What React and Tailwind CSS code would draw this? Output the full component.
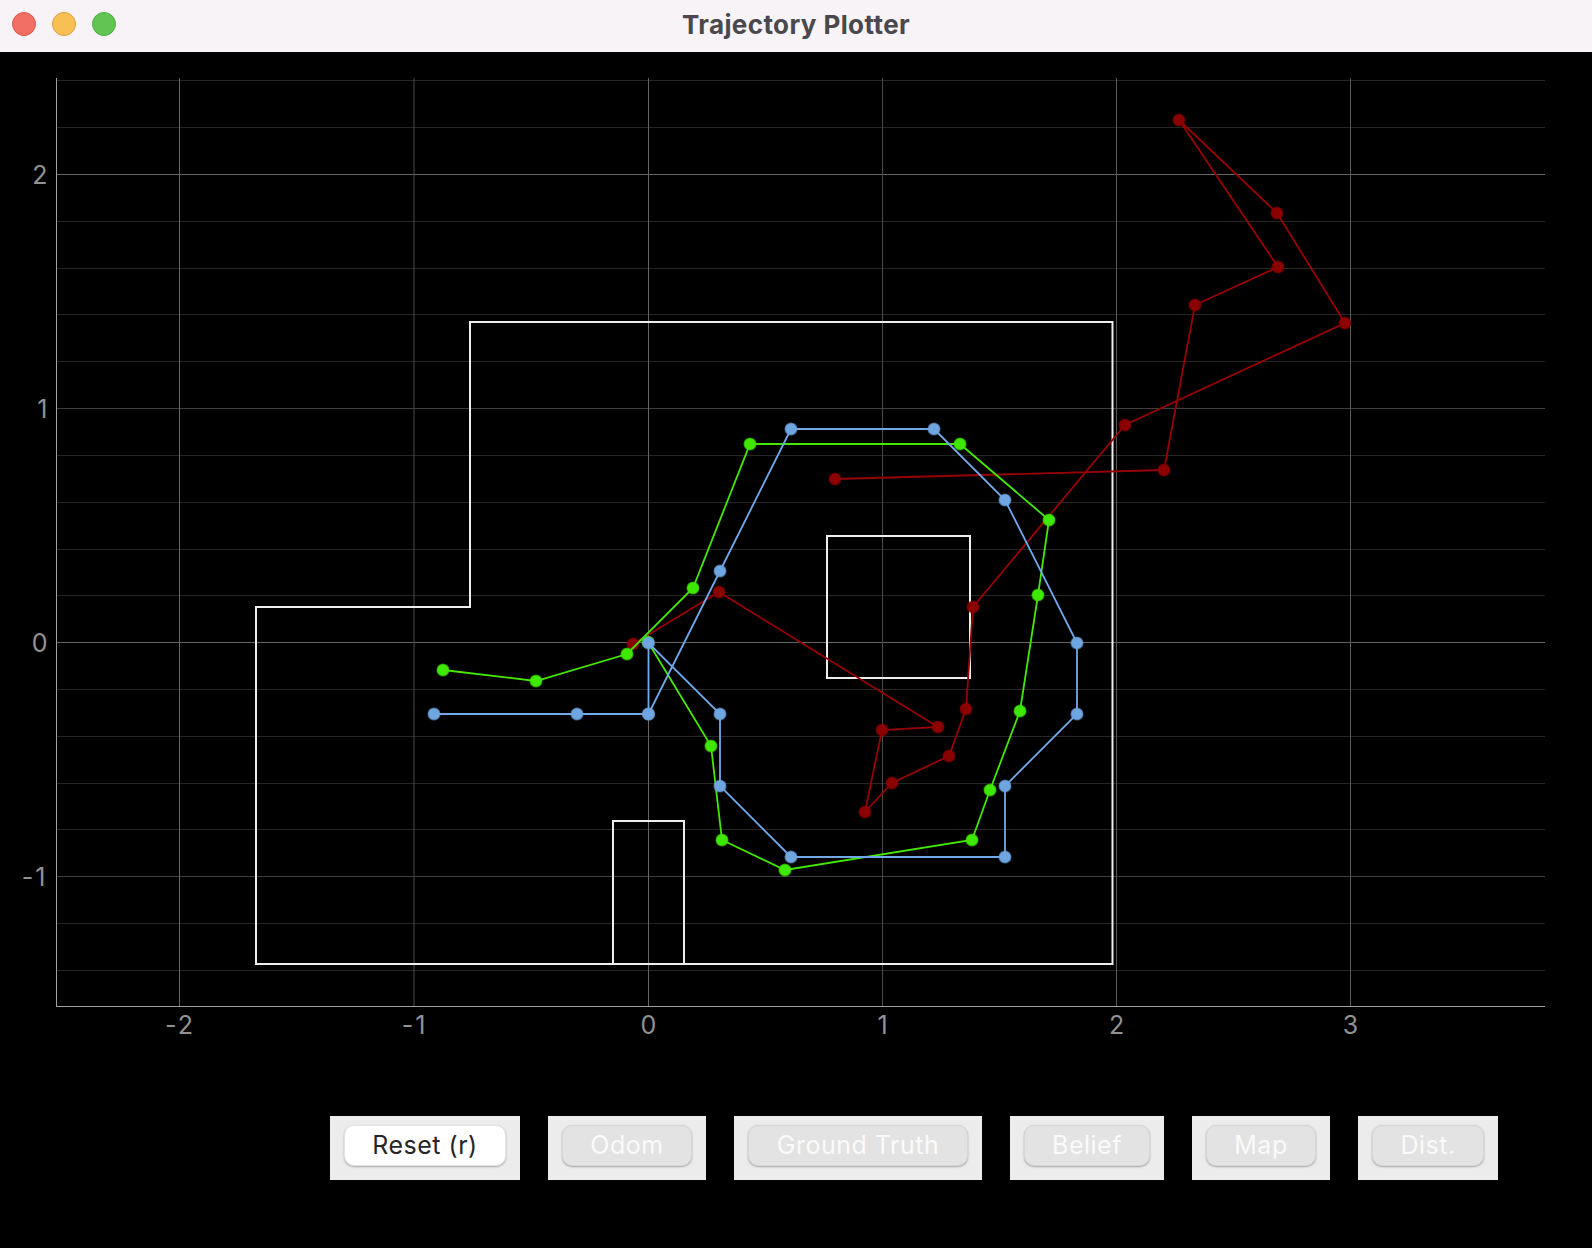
const ui = '"Inter", "Liberation Sans", sans-serif';

const MINOR_Y = [80.5, 127.5, 221.5, 268.5, 314.5, 361.5, 455.5, 502.5, 549.5, 595.5, 689.5, 736.5, 783.5, 829.5, 923.5, 970.5];

const GRID_Y = [
  { y: 174.5, stroke: '#666666' },
  { y: 408.5, stroke: '#3f3f3f' },
  { y: 642.5, stroke: '#666666' },
  { y: 876.5, stroke: '#3f3f3f' },
];
const GRID_X = [
  { x: 179.5, stroke: '#666666' },
  { x: 414, stroke: '#4a4a4a' },
  { x: 648.5, stroke: '#666666' },
  { x: 882.5, stroke: '#4a4a4a' },
  { x: 1116.5, stroke: '#5a5a5a' },
  { x: 1350.5, stroke: '#5a5a5a' },
];

const TICKS_X = [
  { x: 180, label: '-2' },
  { x: 414.5, label: '-1' },
  { x: 648.5, label: '0' },
  { x: 882.5, label: '1' },
  { x: 1116.5, label: '2' },
  { x: 1350.5, label: '3' },
];
const TICKS_Y = [
  { y: 174.5, label: '2' },
  { y: 408.5, label: '1' },
  { y: 642.5, label: '0' },
  { y: 876.5, label: '-1' },
];

const RED = [
  [633, 644], [719, 592], [938, 727], [882, 730], [865, 812], [892, 783], [949, 756], [966, 709], [973, 607],
  [1125, 425], [1345, 323], [1277, 213], [1179, 120], [1278, 267], [1195, 305], [1164, 470], [835, 479],
];
const GREEN = [
  [443, 670], [536, 681], [627, 654], [693, 588], [750, 444], [960, 444], [1049, 520], [1038, 595],
  [1020, 711], [990, 790], [972, 840], [785, 870], [722, 840], [711, 746], [648, 642],
];
const BLUE = [
  [434, 714], [577, 714], [648.5, 714], [720, 571], [791, 429], [934, 429], [1005, 500], [1077, 643], [1077, 714],
  [1005, 786], [1005, 857], [791, 857], [720, 786], [720, 714], [648.5, 643], [648.5, 714],
];

const toPoints = (pts) => pts.map((p) => p.join(',')).join(' ');

const Trace = ({ pts, line, dot }) => (
  <g>
    <polyline points={toPoints(pts)} fill="none" stroke={line} strokeWidth="1.8" />
    {pts.map((p, i) => (
      <circle key={i} cx={p[0]} cy={p[1]} r="5.8" fill={dot} stroke={dot} strokeOpacity="0.55" strokeWidth="1.6" />
    ))}
  </g>
);

const Plot = () => (
  <svg width="1592" height="1064" viewBox="0 52 1592 1064" className="block">
    {/* grid */}
    {MINOR_Y.map((y) => (
      <line key={y} x1="56" x2="1545" y1={y} y2={y} stroke="#262626" />
    ))}
    {GRID_Y.map((g) => (
      <line key={g.y} x1="56" x2="1545" y1={g.y} y2={g.y} stroke={g.stroke} />
    ))}
    {GRID_X.map((g) => (
      <line key={g.x} x1={g.x} x2={g.x} y1="78" y2="1006" stroke={g.stroke} />
    ))}
    {/* axes */}
    <line x1="56.5" x2="56.5" y1="78" y2="1006" stroke="#a0a0a0" />
    <line x1="56" x2="1545" y1="1006.5" y2="1006.5" stroke="#a0a0a0" />
    {TICKS_X.map((t) => (
      <text
        key={t.label}
        x={t.x}
        y="1034"
        textAnchor="middle"
        fill="#929292"
        fontSize="25"
        fontFamily={ui}
        letterSpacing={t.label.length > 1 ? 2 : 0}
      >
        {t.label}
      </text>
    ))}
    {TICKS_Y.map((t) => (
      <text
        key={t.label}
        x="47.5"
        y={t.y + 9}
        textAnchor="end"
        fill="#929292"
        fontSize="25"
        fontFamily={ui}
        letterSpacing={t.label.length > 1 ? 2 : 0}
      >
        {t.label}
      </text>
    ))}
    {/* map walls */}
    <g fill="none" stroke="#eeeeee" strokeWidth="2">
      <polygon points="256,964 256,607 470,607 470,322 1112.5,322 1112.5,964" />
      <polyline points="613,964 613,821 684,821 684,964" />
      <rect x="827" y="536" width="143" height="142" />
    </g>
    <Trace pts={RED} line="#990000" dot="#8b0000" />
    <Trace pts={GREEN} line="#44e800" dot="#3fe800" />
    <Trace pts={BLUE} line="#72a9ea" dot="#6fa5e0" />
  </svg>
);

const PlotButton = ({ label, width, disabled = true }) => (
  <div className="bg-[#ececec] px-[14px] pt-[9px] pb-[14px]">
    <button
      disabled={disabled}
      className={`h-[41px] rounded-[10px] border text-[25px] leading-none tracking-[0.5px] shadow-[0_1px_2px_rgba(0,0,0,0.3)] ${
        disabled ? 'border-[#d6d6d6] bg-[#e3e3e3] text-[#fafafa]' : 'border-[#e4e4e4] bg-white text-[#262626]'
      } ${width}`}
      style={{ fontFamily: ui }}
    >
      {label}
    </button>
  </div>
);

export default function App() {
  return (
    <div className="flex h-[1248px] w-[1592px] flex-col overflow-hidden bg-black">
      <div className="relative flex h-[52px] shrink-0 items-center justify-center bg-[#f7f3f7] pb-[3px]">
        <div className="absolute left-[12px] top-[12px] flex gap-[16px]">
          <span className="h-[24px] w-[24px] rounded-full border border-[#dc5a50] bg-[#f16f65]" />
          <span className="h-[24px] w-[24px] rounded-full border border-[#dca03e] bg-[#f9bf52]" />
          <span className="h-[24px] w-[24px] rounded-full border border-[#4fae45] bg-[#61c554]" />
        </div>
        <span className="text-[26px] font-bold tracking-[0.4px] text-[#4a484c]" style={{ fontFamily: ui }}>
          Trajectory Plotter
        </span>
      </div>
      <Plot />
      <div className="flex gap-[28px] pl-[330px]">
        <PlotButton label="Reset (r)" width="w-[162px]" disabled={false} />
        <PlotButton label="Odom" width="w-[130px]" />
        <PlotButton label="Ground Truth" width="w-[220px]" />
        <PlotButton label="Belief" width="w-[126px]" />
        <PlotButton label="Map" width="w-[110px]" />
        <PlotButton label="Dist." width="w-[112px]" />
      </div>
    </div>
  );
}
